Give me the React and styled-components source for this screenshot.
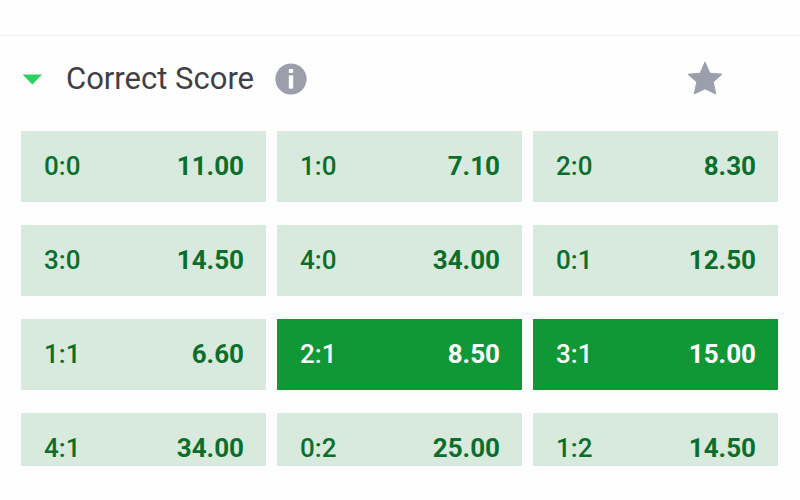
import React, { useState } from 'react';
import styled, { createGlobalStyle } from 'styled-components';

const scores = [
    { score: '0:0', odds: '11.00' },
    { score: '1:0', odds: '7.10' },
    { score: '2:0', odds: '8.30' },
    { score: '3:0', odds: '14.50' },
    { score: '4:0', odds: '34.00' },
    { score: '0:1', odds: '12.50' },
    { score: '1:1', odds: '6.60' },
    { score: '2:1', odds: '8.50' },
    { score: '3:1', odds: '15.00' },
    { score: '4:1', odds: '34.00' },
    { score: '0:2', odds: '25.00' },
    { score: '1:2', odds: '14.50' },
];

const App = () => {
    const [open, setOpen] = useState(true);
    const [picked, setPicked] = useState(['2:1', '3:1']);

    const toggleScore = (score) => {
        if (picked.includes(score)) {
            setPicked(picked.filter(item => item !== score));
        } else {
            setPicked([...picked, score]);
        }
    }

    return (
        <>
            <GlobalStyle />
            <TopBar />
            <Market>
                <Header>
                    <Toggle aria-expanded={open} onClick={() => setOpen(!open)}>
                        <svg width="23" height="12" viewBox="0 0 23 12" aria-hidden="true">
                            <path d="M1.6 1.6H21L11.3 11.6Z" fill="#2fcf60" />
                        </svg>
                        <Title>Correct Score</Title>
                    </Toggle>
                    <IconButton aria-label="Market info">
                        <svg width="32" height="32" viewBox="0 0 32 32">
                            <circle cx="16" cy="16" r="15.6" fill="#9c9eab" />
                            <rect x="13.8" y="6" width="4.4" height="4" rx="0.8" fill="#fff" />
                            <path d="M13.8 12.4H18.2V25.6H13.8Z" fill="#fff" />
                        </svg>
                    </IconButton>
                    <Favourite aria-label="Add to favourites">
                        <svg width="36" height="36" viewBox="0 0 36 36">
                            <path
                                d="M18 1L22.8 12.2L35 13.2L26.2 21L28.8 33L18 27.8L7.2 33L9.8 21L1 13.2L13.2 12.2Z"
                                fill="#9a9fab"
                                stroke="#9a9fab"
                                strokeLinejoin="round"
                            />
                        </svg>
                    </Favourite>
                </Header>
                {open && (
                    <Scores>
                        {scores.map(({ score, odds }) => (
                            <Outcome
                                key={score}
                                $picked={picked.includes(score)}
                                aria-pressed={picked.includes(score)}
                                onClick={() => toggleScore(score)}
                            >
                                <span>{score}</span>
                                <Odds>{odds}</Odds>
                            </Outcome>
                        ))}
                    </Scores>
                )}
            </Market>
        </>
    )
}

export default App;

const GlobalStyle = createGlobalStyle`
* {
    box-sizing: border-box;
}

body {
    margin: 0;
    background: #fefefe;
    font-family: Roboto, sans-serif;
}

button {
    margin: 0;
    padding: 0;
    border: 0;
    background: none;
    font-family: inherit;
    cursor: pointer;
}
`

const TopBar = styled.div`
height: 36px;
border-bottom: 1px solid #f1f1f3;
`

const Market = styled.section`
padding: 0 22px 0 21px;
`

const Header = styled.header`
display: flex;
align-items: center;
height: 95px;
padding: 0 55px 10px 0;
`

const Toggle = styled.button`
display: flex;
align-items: center;
gap: 22px;
margin-right: 21px;
`

const Title = styled.span`
color: #3f3f47;
font-size: 31px;
line-height: 40px;
`

const IconButton = styled.button`
display: flex;
`

const Favourite = styled(IconButton)`
margin-left: auto;
`

const Scores = styled.div`
display: grid;
grid-template-columns: repeat(3, 1fr);
grid-auto-rows: 71px;
gap: 23px 11px;
max-height: 335px;
overflow: hidden;
`

const Outcome = styled.button`
display: flex;
justify-content: space-between;
align-items: center;
padding: 0 22px 1px 23px;
background: ${({ $picked }) => ($picked ? '#109837' : '#d7eadd')};
color: ${({ $picked }) => ($picked ? '#fff' : '#0c6e2c')};
font-size: 26px;
font-weight: 500;
line-height: 32px;
`

const Odds = styled.span`
font-weight: 700;
`
